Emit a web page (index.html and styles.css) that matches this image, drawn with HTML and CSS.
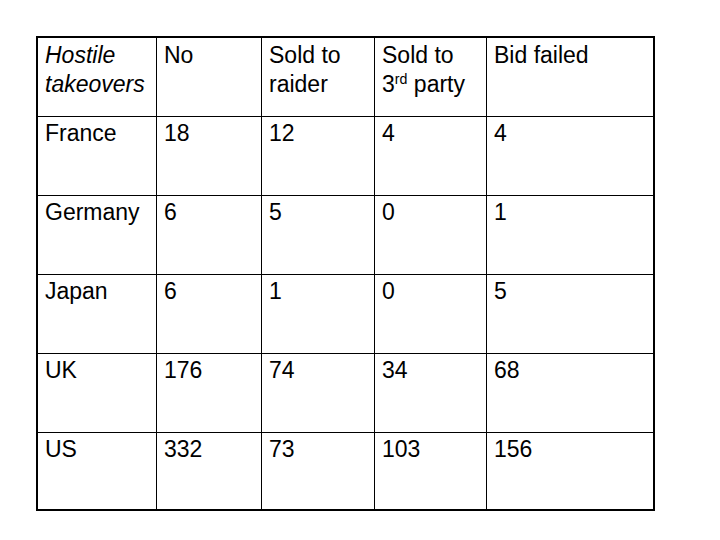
FILE: index.html
```html
<!DOCTYPE html>
<html>
<head>
<meta charset="utf-8">
<link rel="stylesheet" href="styles.css">
</head>
<body>
<div class="page">
  <div class="grid">
    <div class="cell"><em>Hostile<br>takeovers</em></div>
    <div class="cell bl">No</div>
    <div class="cell bl">Sold to<br>raider</div>
    <div class="cell bl">Sold to<br>3<sup>rd</sup> party</div>
    <div class="cell bl">Bid failed</div>

    <div class="cell bt">France</div>
    <div class="cell bt bl">18</div>
    <div class="cell bt bl">12</div>
    <div class="cell bt bl">4</div>
    <div class="cell bt bl">4</div>

    <div class="cell bt">Germany</div>
    <div class="cell bt bl">6</div>
    <div class="cell bt bl">5</div>
    <div class="cell bt bl">0</div>
    <div class="cell bt bl">1</div>

    <div class="cell bt">Japan</div>
    <div class="cell bt bl">6</div>
    <div class="cell bt bl">1</div>
    <div class="cell bt bl">0</div>
    <div class="cell bt bl">5</div>

    <div class="cell bt">UK</div>
    <div class="cell bt bl">176</div>
    <div class="cell bt bl">74</div>
    <div class="cell bt bl">34</div>
    <div class="cell bt bl">68</div>

    <div class="cell bt">US</div>
    <div class="cell bt bl">332</div>
    <div class="cell bt bl">73</div>
    <div class="cell bt bl">103</div>
    <div class="cell bt bl">156</div>
  </div>
</div>
</body>
</html>
```
FILE: styles.css
```css
html, body {
  margin: 0;
  padding: 0;
  background: #fff;
}
.page {
  padding: 36px 0 0 36px;
  font-family: "Liberation Sans", Arial, sans-serif;
  font-size: 23px;
  line-height: 29px;
  color: #000;
}
.grid {
  box-sizing: border-box;
  width: 619px;
  display: grid;
  grid-template-columns: 118px 105px 113px 112px 167px;
  grid-template-rows: 78px 79px 79px 79px 79px 77px;
  border: 2px solid #000;
}
.cell {
  box-sizing: border-box;
  padding: 3px 6px 0 7px;
  white-space: nowrap;
}
.bl {
  border-left: 1px solid #000;
}
.bt {
  border-top: 1px solid #000;
  padding-top: 2px;
}
em {
  font-style: italic;
}
sup {
  font-size: 0.62em;
  line-height: 0;
  vertical-align: 0.55em;
}
```
